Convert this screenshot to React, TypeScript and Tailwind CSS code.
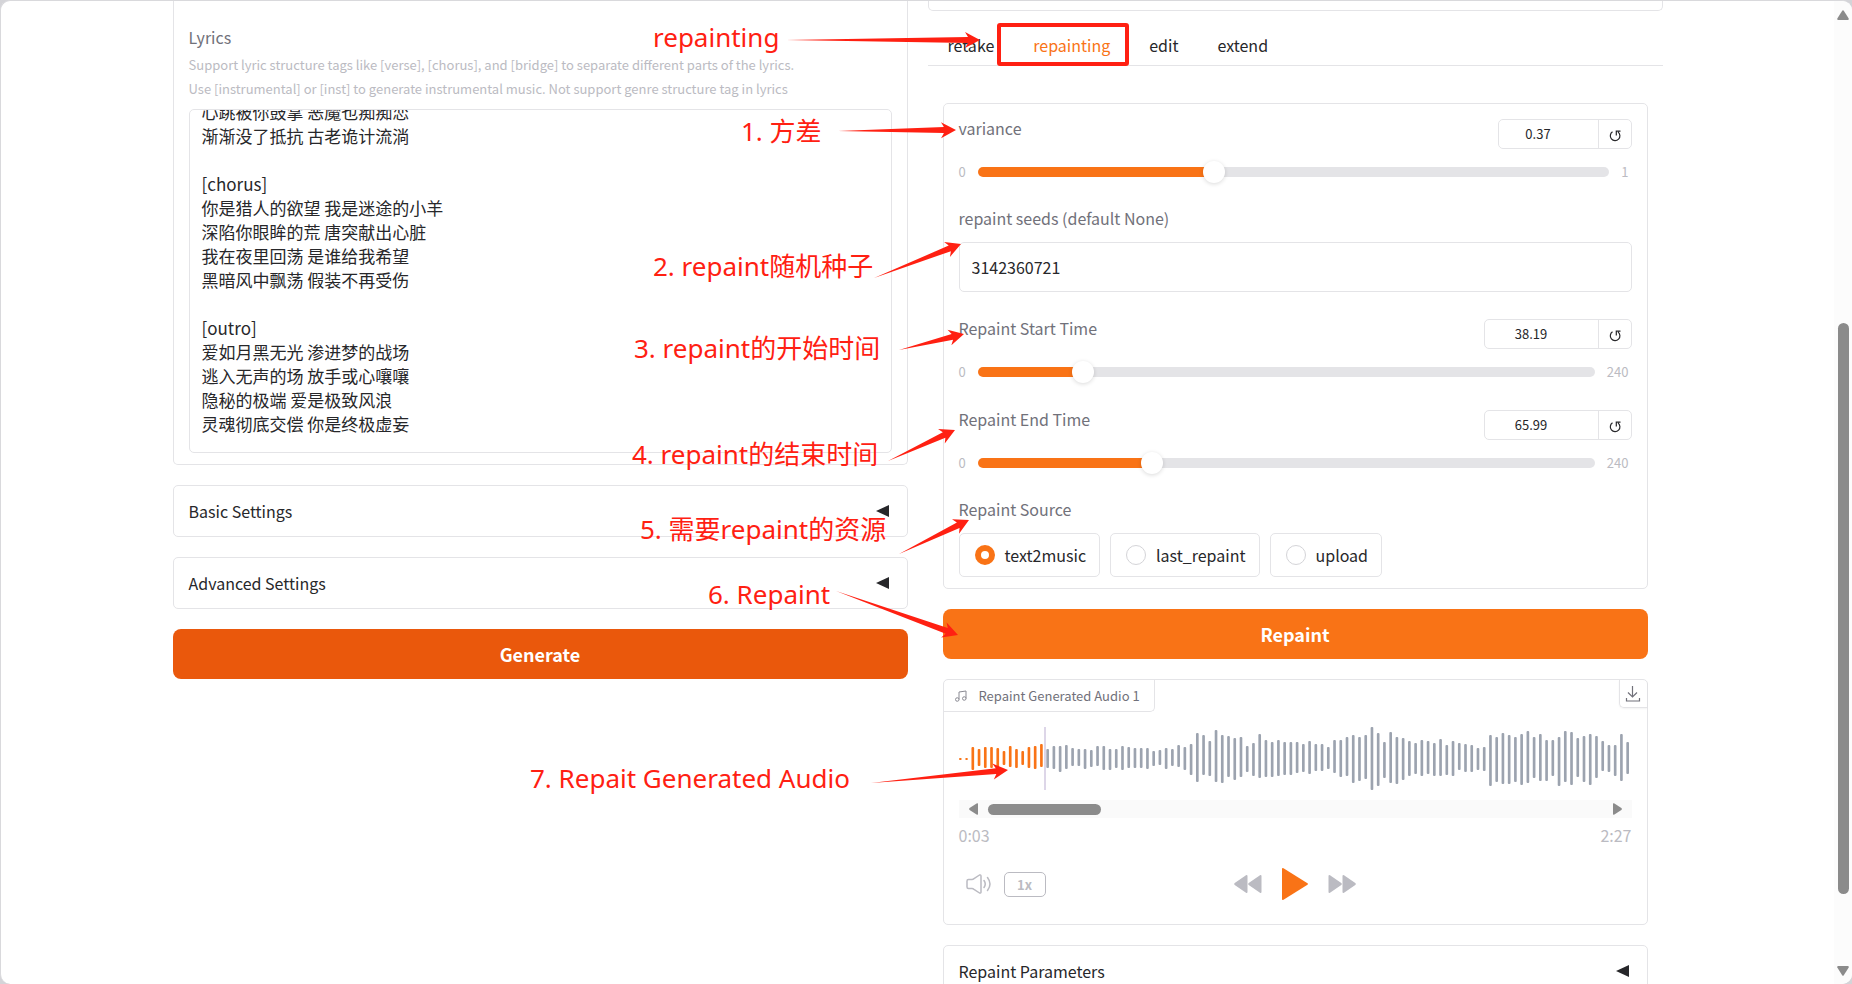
import React, { useEffect, useRef, useState } from 'react';

const LYRICS = `心跳被你鼓掌 恶魔也痴痴恋
渐渐没了抵抗 古老诡计流淌

[chorus]
你是猎人的欲望 我是迷途的小羊
深陷你眼眸的荒 唐突献出心脏
我在夜里回荡 是谁给我希望
黑暗风中飘荡 假装不再受伤

[outro]
爱如月黑无光 渗进梦的战场
逃入无声的场 放手或心嚷嚷
隐秘的极端 爱是极致风浪
灵魂彻底交偿 你是终极虚妄`;

const TABS = ['retake', 'repainting', 'edit', 'extend'];
const SOURCES = ['text2music', 'last_repaint', 'upload'];

// [top, bottom] of each wave bar
const WAVE = [
  [114, 120], [114, 120], [81, 150], [87, 138], [81, 144], [81, 144], [84, 144], [93, 135], [78, 141], [87, 144],
  [93, 135], [81, 144], [78, 147], [72, 141], [87, 144], [78, 147], [78, 156], [75, 147], [84, 138], [87, 138],
  [87, 147], [90, 141], [78, 138], [78, 150], [87, 150], [87, 144], [78, 150], [81, 144], [84, 144], [84, 144],
  [84, 147], [93, 138], [90, 135], [84, 147], [87, 138], [75, 141], [81, 150], [72, 165], [39, 186], [45, 165],
  [63, 168], [30, 186], [45, 189], [48, 171], [54, 180], [51, 171], [78, 156], [69, 168], [42, 174], [60, 171],
  [66, 171], [60, 168], [66, 165], [66, 165], [66, 159], [72, 156], [63, 162], [72, 153], [72, 153], [81, 147],
  [60, 159], [60, 171], [51, 168], [45, 189], [51, 183], [45, 177], [21, 210], [39, 198], [66, 174], [36, 189],
  [51, 192], [54, 180], [63, 168], [69, 162], [60, 168], [63, 162], [69, 168], [57, 168], [75, 165], [63, 168],
  [69, 150], [72, 156], [75, 156], [84, 150], [81, 153], [45, 198], [51, 186], [39, 192], [45, 192], [51, 186],
  [42, 195], [33, 189], [51, 174], [42, 183], [60, 183], [60, 168], [51, 198], [33, 186], [36, 195], [54, 171],
  [48, 186], [42, 195], [48, 174], [63, 153], [75, 156], [75, 168], [42, 183], [66, 162],
];
const PLAYED = 14;

const NOTES = [
  { text: 'repainting', x: 652, y: 18, from: [785, 39], to: [979, 39] },
  { text: '1. 方差', x: 740, y: 112, from: [837, 130], to: [955, 129] },
  { text: '2. repaint随机种子', x: 652, y: 247, from: [873, 277], to: [960, 243] },
  { text: '3. repaint的开始时间', x: 633, y: 329, from: [898, 349], to: [963, 333] },
  { text: '4. repaint的结束时间', x: 631, y: 435, from: [887, 460], to: [954, 429] },
  { text: '5. 需要repaint的资源', x: 639, y: 510, from: [898, 553], to: [968, 519] },
  { text: '6. Repaint', x: 707, y: 575, from: [835, 590], to: [957, 634] },
  { text: '7. Repait Generated Audio', x: 529, y: 759, from: [870, 782], to: [1007, 769] },
];

// tapered arrow with a barbed head
function arrowPoints([x1, y1]: number[], [x2, y2]: number[]) {
  const len = Math.hypot(x2 - x1, y2 - y1);
  const ux = (x2 - x1) / len;
  const uy = (y2 - y1) / len;
  const at = (back: number, side: number) =>
    `${x2 - ux * back - uy * side},${y2 - uy * back + ux * side}`;
  return [`${x1},${y1}`, at(12, -3), at(15, -8), at(0, 0), at(15, 8), at(12, 3)].join(' ');
}

interface SliderFieldProps {
  id: string;
  label: string;
  max: number;
  step: number;
  initial: number;
  wide?: boolean;
}

const SliderField: React.FC<SliderFieldProps> = ({ id, label, max, step, initial, wide }) => {
  const [value, setValue] = useState(initial);
  const ratio = value / max;
  // the thumb is 22px wide, so its centre travels between 11px and 100% - 11px
  const stop = `calc(11px + (100% - 22px) * ${ratio})`;
  const update = (e: React.ChangeEvent<HTMLInputElement>) => setValue(Number(e.target.value));

  return (
    <div>
      <div className="flex h-[30px] items-start justify-between">
        <label htmlFor={id} className="text-base leading-[18px] text-[#71717a]">{label}</label>
        <div className={`flex h-[30px] rounded-[5px] border border-[#e4e4e7] ${wide ? 'w-[148px]' : 'w-[134px]'}`}>
          <input
            type="number"
            aria-label={`${label} value`}
            className="min-w-0 flex-1 appearance-none bg-transparent pr-5 text-center text-[13px] text-[#27272a] outline-none [-moz-appearance:textfield] [&::-webkit-inner-spin-button]:appearance-none"
            value={value}
            step={step}
            onChange={update}
          />
          <button
            type="button"
            aria-label="Reset"
            className="flex w-[33px] items-center justify-center border-l border-[#e4e4e7]"
            onClick={() => setValue(initial)}
          >
            <svg className="mt-1 h-3 w-3" viewBox="0 0 12 12" fill="none" stroke="#27272a" strokeWidth="1.200">
              <path d="M3.500 1.800A4.800 4.800 0 1 0 9 2M7.300 5.500V1.200H11.500" />
            </svg>
          </button>
        </div>
      </div>
      <div className="mt-3 flex h-[22px] items-center gap-3 text-[13px] text-[#bbbbc2]">
        <span>0</span>
        <input
          id={id}
          type="range"
          min={0}
          max={max}
          step={step}
          value={value}
          onChange={update}
          className="h-[10px] min-w-0 flex-1 appearance-none rounded-full [&::-webkit-slider-thumb]:h-[22px] [&::-webkit-slider-thumb]:w-[22px] [&::-webkit-slider-thumb]:appearance-none [&::-webkit-slider-thumb]:rounded-full [&::-webkit-slider-thumb]:bg-white [&::-webkit-slider-thumb]:shadow-[0_1px_4px_rgba(0,0,0,0.15)]"
          style={{ background: `linear-gradient(to right, #f97316 ${stop}, #e4e4e7 ${stop})` }}
        />
        <span className="pr-[3px]">{max}</span>
      </div>
    </div>
  );
};

const Accordion: React.FC<{ title: string }> = ({ title }) => (
  <button
    type="button"
    className="flex h-[52px] w-full shrink-0 items-center justify-between rounded-[5px] border border-[#e4e4e7] px-[15px] text-base text-[#27272a]"
  >
    {title}
    <svg className="mr-[3px] h-3 w-[13px]" viewBox="0 0 13 12" fill="#27272a">
      <path d="M0 6 13 0v12z" />
    </svg>
  </button>
);

const Waveform: React.FC = () => (
  <svg className="block h-[63px] w-full" viewBox="0 21 2019 189" preserveAspectRatio="none">
    {WAVE.map(([top, bottom], i) => (
      <rect
        key={i}
        x={i * 18.71}
        y={top}
        width={8}
        height={bottom - top}
        rx={3}
        fill={i < PLAYED ? '#f97316' : '#9ca3af'}
      />
    ))}
    <rect x={255} y={21} width={6} height={189} fill="#ddd6e8" />
  </svg>
);

const AudioPlayer: React.FC = () => (
  <section className="relative h-[246px] shrink-0 rounded-[5px] border border-[#e4e4e7] px-[15px] pt-[47px]">
    <div className="absolute top-0 left-0 flex h-8 items-center rounded-br-[5px] border-r border-b border-[#e4e4e7] pr-[14px] pl-[11px] text-[13px] text-[#71717a]">
      <svg className="mr-3 h-3 w-3" viewBox="0 0 24 24" fill="none" stroke="#8a8a93" strokeWidth="2">
        <path d="M8 19V4l14-2v15" />
        <circle cx="4.500" cy="19" r="3.500" />
        <circle cx="18.500" cy="17" r="3.500" />
      </svg>
      Repaint Generated Audio 1
    </div>
    <button
      type="button"
      aria-label="Download"
      className="absolute top-0 right-0 flex h-[28px] w-7 items-center justify-center rounded-bl-[5px] border-b border-l border-[#e4e4e7] shadow-xs"
    >
      <svg className="h-4 w-4" viewBox="0 0 16 16" fill="none" stroke="#71717a" strokeWidth="1.200">
        <path d="M7.500 0v11M3 6.500l4.500 4.500 4.500-4.500M1.500 12v3h13v-3" />
      </svg>
    </button>

    <Waveform />
    <div className="mt-[10px] flex h-[18px] items-center bg-[#fafafa] px-[10px]">
      <svg className="h-3 w-[9px]" viewBox="0 0 9 12" fill="#8b8b8b">
        <path d="M8 .3Q9 0 9 1v10q0 1-1 .7L.6 7Q-.4 6 .6 5z" />
      </svg>
      <div className="ml-[10px] h-[11px] w-[113px] rounded-full bg-[#8b8b8b]" />
      <svg className="ml-auto h-3 w-[9px]" viewBox="0 0 9 12" fill="#8b8b8b">
        <path d="M1 .3Q0 0 0 1v10q0 1 1 .7L8.400 7q1-1 0-2z" />
      </svg>
    </div>
    <div className="mt-[7px] flex justify-between text-base leading-5 text-[#bbbbc2]">
      <span>0:03</span>
      <span>2:27</span>
    </div>

    <div className="mt-[23px] grid h-8 grid-cols-3 items-center">
      <div className="flex items-center gap-[13px] pl-[7px]">
        <button type="button" aria-label="Volume">
          <svg className="block h-5 w-[25px]" viewBox="0 0 25 20" fill="none" stroke="#bbbbc2" strokeWidth="1.500" strokeLinejoin="round" strokeLinecap="round">
            <path d="M2.500 5.500H6q1 0 2-.8L13.500 1q1.500-.5 1.500 1v16q0 1.500-1.500 1L8 15.300q-1-.8-2-.8H2.500Q1 14.500 1 13V7q0-1.500 1.500-1.500zM18 6.500q2.500 3.500 0 7M21.500 3.500q5 6.500 0 13" />
          </svg>
        </button>
        <button type="button" className="h-[25px] w-[42px] rounded-[5px] border border-[#bbbbc2] text-[13px] leading-[23px] font-bold text-[#bbbbc2]">
          1x
        </button>
      </div>
      <div className="flex items-center justify-center gap-5">
        <button type="button" aria-label="Rewind">
          <svg className="block h-[18px] w-7" viewBox="0 0 28 18" fill="#bbbbc2">
            <path d="M12 .3q1.500-.7 1.500 1v15.400q0 1.700-1.500 1L.7 10q-1-1 0-2zM26 .3q1.500-.7 1.500 1v15.400q0 1.700-1.500 1L14.700 10q-1-1 0-2z" />
          </svg>
        </button>
        <button type="button" aria-label="Play">
          <svg className="block h-8 w-[26px]" viewBox="0 0 26 32" fill="#f97316">
            <path d="M0 1q0-1.500 1.500-.7L25.500 15.300q.8.700 0 1.400L1.500 31.700Q0 32.500 0 31z" />
          </svg>
        </button>
        <button type="button" aria-label="Forward">
          <svg className="block h-[18px] w-7" viewBox="0 0 28 18" fill="#bbbbc2">
            <path d="M2 .3Q.5-.4.5 1.300v15.400q0 1.700 1.500 1L13.300 10q1-1 0-2zM16 .3q-1.500-.7-1.500 1v15.400q0 1.700 1.500 1L27.300 10q1-1 0-2z" />
          </svg>
        </button>
      </div>
    </div>
  </section>
);

const RepaintPanel: React.FC = () => {
  const [source, setSource] = useState('text2music');

  return (
    <section className="flex flex-col gap-[27px] rounded-[5px] border border-[#e4e4e7] px-[15px] pt-[15px] pb-[11px]">
      <SliderField id="variance" label="variance" max={1} step={0.01} initial={0.37} />
      <div>
        <label htmlFor="seeds" className="block text-base leading-4 text-[#71717a]">
          repaint seeds (default None)
        </label>
        <input
          id="seeds"
          type="text"
          defaultValue="3142360721"
          className="mt-4 h-[50px] w-full rounded-[5px] border border-[#e4e4e7] px-3 text-base text-[#27272a] outline-none"
        />
      </div>
      <SliderField id="start" label="Repaint Start Time" max={240} step={0.01} initial={38.19} wide />
      <SliderField id="end" label="Repaint End Time" max={240} step={0.01} initial={65.99} wide />
      <fieldset>
        <legend className="text-base leading-4 text-[#71717a]">Repaint Source</legend>
        <div className="mt-4 flex gap-[10px]">
          {SOURCES.map((name) => (
            <label
              key={name}
              className="flex h-11 items-center gap-[10px] rounded-[5px] border border-[#e4e4e7] pr-[13px] pl-[15px] text-base text-[#27272a]"
            >
              <input
                type="radio"
                name="source"
                checked={source === name}
                onChange={() => setSource(name)}
                className="h-5 w-5 appearance-none rounded-full border border-[#d4d4d8] bg-white checked:border-[6px] checked:border-[#f97316]"
              />
              {name}
            </label>
          ))}
        </div>
      </fieldset>
    </section>
  );
};

export default function App() {
  const [tab, setTab] = useState('repainting');
  const lyricsRef = useRef<HTMLTextAreaElement>(null);

  useEffect(() => {
    if (lyricsRef.current) {
      lyricsRef.current.scrollTop = lyricsRef.current.scrollHeight;
    }
  }, []);

  return (
    <div className="h-screen overflow-hidden bg-[#d4d4d8] font-['Noto_Sans_CJK_SC',sans-serif]">
      <div className="relative flex h-full overflow-hidden rounded-[10px] border-t border-l border-[#d9d9dc] bg-white">
        <main className="min-w-0 flex-1">
          <div className="mx-auto flex max-w-[1490px] items-start gap-5">
            {/* Left column */}
            <div className="flex min-w-0 flex-1 flex-col gap-5">
              <section className="flex flex-col rounded-b-[5px] border border-t-0 border-[#e4e4e7] px-[15px] pt-[26px] pb-[11px]">
                <label htmlFor="lyrics" className="text-base leading-5 text-[#71717a]">Lyrics</label>
                <p className="mt-[6px] text-[13px] leading-6 text-[#bbbbc2]">
                  Support lyric structure tags like [verse], [chorus], and [bridge] to separate different parts of the lyrics.
                  <br />
                  Use [instrumental] or [inst] to generate instrumental music. Not support genre structure tag in lyrics
                </p>
                <textarea
                  id="lyrics"
                  ref={lyricsRef}
                  defaultValue={LYRICS}
                  className="mt-2 h-[344px] w-full resize-none rounded-[5px] border border-[#e4e4e7] px-3 pt-3 pb-4 text-[17px] leading-6 text-[#27272a] outline-none [scrollbar-width:none]"
                />
              </section>
              <Accordion title="Basic Settings" />
              <Accordion title="Advanced Settings" />
              <button type="button" className="h-[50px] rounded-lg bg-[#ea580c] text-lg font-bold text-white">
                Generate
              </button>
            </div>

            {/* Right column */}
            <div className="min-w-0 flex-1">
              <div className="h-[10px] rounded-b-[5px] border border-t-0 border-[#e4e4e7]" />
              <div role="tablist" className="flex h-[55px] items-center border-b border-[#e4e4e7] pt-[14px]">
                {TABS.map((name) => (
                  <button
                    key={name}
                    type="button"
                    role="tab"
                    aria-selected={tab === name}
                    onClick={() => setTab(name)}
                    className={`pr-[19px] pl-5 text-base ${tab === name ? 'text-[#f97316]' : 'text-[#27272a]'}`}
                  >
                    {name}
                  </button>
                ))}
              </div>
              <div className="flex flex-col gap-5 px-[15px] pt-[37px]">
                <RepaintPanel />
                <button type="button" className="h-[50px] rounded-lg bg-[#f97316] text-lg font-bold text-white">
                  Repaint
                </button>
                <AudioPlayer />
                <Accordion title="Repaint Parameters" />
              </div>
            </div>
          </div>
        </main>

        {/* Page scrollbar */}
        <div className="flex w-[18px] shrink-0 flex-col items-center bg-[#fcfcfc] pt-[9px] pb-2">
          <svg className="h-[10px] w-3" viewBox="0 0 12 10" fill="#8b8b8b">
            <path d="M5.200.8q.8-1 1.600 0L11.700 8.500Q12 10 11 10H1Q0 10 .3 8.500z" />
          </svg>
          <div className="flex w-full flex-1 flex-col items-center py-2">
            <div className="grow-[295]" />
            <div className="w-[11px] grow-[570] rounded-full bg-[#8b8b8b]" />
            <div className="grow-[64]" />
          </div>
          <svg className="h-[10px] w-3" viewBox="0 0 12 10" fill="#8b8b8b">
            <path d="M5.200 9.200q.8 1 1.600 0L11.700 1.500Q12 0 11 0H1Q0 0 .3 1.500z" />
          </svg>
        </div>

        {/* Annotations over the page */}
        <div className="pointer-events-none absolute inset-0 font-['Noto_Sans','Noto_Sans_CJK_SC',sans-serif] text-[26px] leading-9 whitespace-nowrap text-[#ff2012]">
          <svg className="absolute inset-0 h-full w-full" fill="#ff2012">
            {NOTES.map((note) => (
              <polygon key={note.text} points={arrowPoints(note.from, note.to)} />
            ))}
          </svg>
          {NOTES.map((note) => (
            <span key={note.text} className="absolute" style={{ left: note.x, top: note.y }}>
              {note.text}
            </span>
          ))}
          <div className="absolute top-[22px] left-[996px] h-[43px] w-[132px] rounded-[3px] border-4 border-[#ff2012]" />
        </div>
      </div>
    </div>
  );
}
